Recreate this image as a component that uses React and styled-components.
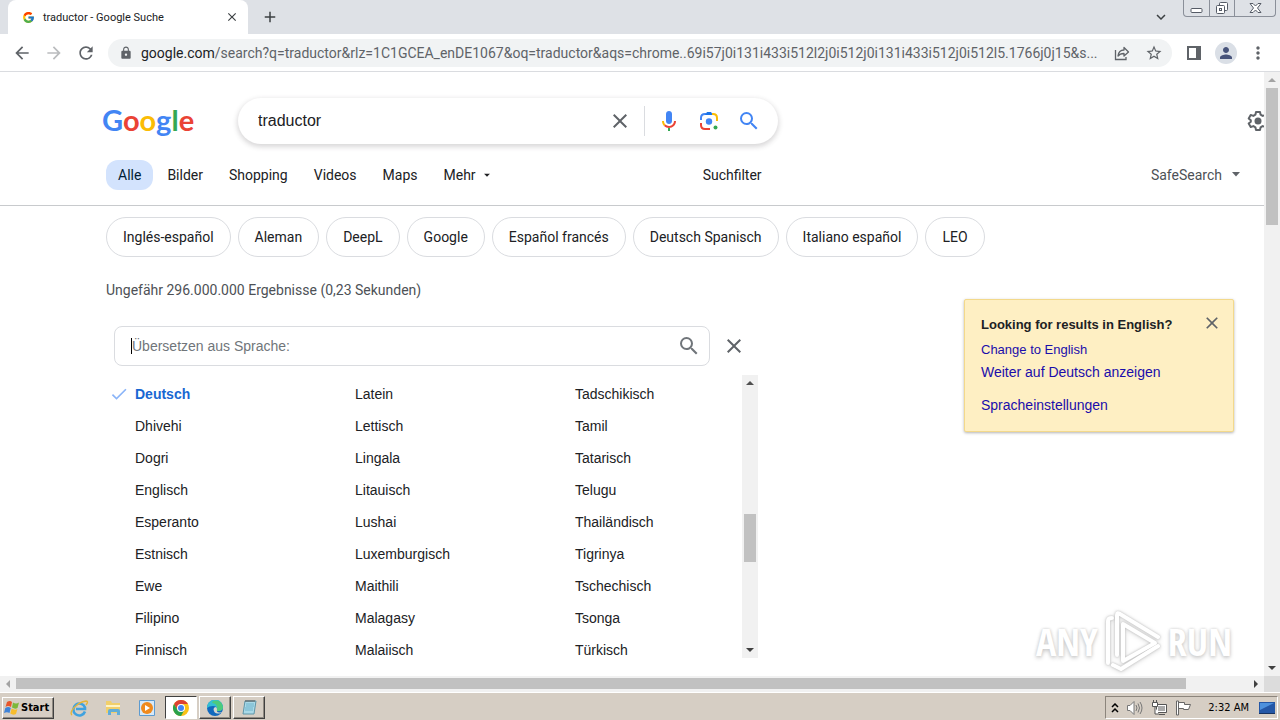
import React, {useState} from "react"
import styled, {createGlobalStyle, css} from "styled-components"
import {FcGoogle} from "react-icons/fc"
import {MdClose, MdSearch, MdCheck, MdArrowBack, MdArrowForward, MdRefresh, MdLock, MdStarOutline, MdMoreVert, MdAdd, MdArrowDropDown, MdPerson, MdKeyboardArrowDown} from "react-icons/md"

const GlobalStyle = createGlobalStyle`
    * {
        box-sizing: border-box;
    }
    body {
        margin: 0;
        background: #fff;
        color: #202124;
        font-family: "Liberation Sans", Arial, sans-serif;
        font-size: 14px;
    }
    button, input {
        font: inherit;
        color: inherit;
        border: 0;
        padding: 0;
        background: none;
    }
    a {
        color: inherit;
        text-decoration: none;
    }
    svg {
        display: block;
        flex: none;
    }
`

const uiFont = `Roboto, "Noto Sans", sans-serif`
const productFont = `Roboto, sans-serif`

const Screen = styled.div`
    display: flex;
    flex-direction: column;
    height: 100vh;
    overflow: hidden;
`

/* browser frame */

const TabStrip = styled.div`
    display: flex;
    align-items: center;
    height: 34px;
    padding-left: 8px;
    background: #dee1e6;
`
const Tab = styled.div`
    display: flex;
    align-items: center;
    width: 240px;
    height: 34px;
    padding: 0 9px 0 14px;
    gap: 8px;
    border-radius: 8px 8px 0 0;
    background: #fff;
    font-family: ${uiFont};
    font-size: 11px;
`
const TabTitle = styled.span`
    flex: 1;
    white-space: nowrap;
`
const IconButton = styled.button`
    display: flex;
    align-items: center;
    justify-content: center;
    width: ${(props) => props.$size || 24}px;
    height: ${(props) => props.$size || 24}px;
    color: ${(props) => props.$color || "#5f6368"};
    flex: none;
`
const NewTab = styled(IconButton)`
    margin-left: 10px;
`
const WindowControls = styled.div`
    display: flex;
    align-self: flex-start;
    height: 17px;
    margin: 0 4px 0 10px;
    border: 1px solid #8a8f99;
    border-top: 0;
    border-radius: 0 0 4px 4px;
`
const WindowButton = styled.button`
    display: flex;
    align-items: center;
    justify-content: center;
    width: ${(props) => (props.$wide ? 41 : 25)}px;
    & + & {
        border-left: 1px solid #8a8f99;
    }
`
const Spacer = styled.div`
    flex: 1;
`

const Toolbar = styled.div`
    display: flex;
    align-items: center;
    height: 38px;
    padding: 0 10px;
    gap: 8px;
    border-bottom: 1px solid #dadce0;
    background: #fff;
`
const AddressBar = styled.div`
    display: flex;
    align-items: center;
    flex: 1;
    min-width: 0;
    height: 28px;
    margin: 0 2px;
    padding: 0 6px 0 11px;
    gap: 8px;
    border-radius: 14px;
    background: #f1f3f4;
    color: #5f6368;
`
const Address = styled.a`
    flex: 1;
    min-width: 0;
    overflow: hidden;
    white-space: nowrap;
    font-family: ${uiFont};
    font-size: 14px;
    line-height: 20px;
`
const Host = styled.span`
    color: #202124;
`
const Avatar = styled.button`
    display: flex;
    align-items: center;
    justify-content: center;
    width: 22px;
    height: 22px;
    margin: 0 1px;
    border-radius: 50%;
    background: #dadfe6;
    color: #47537a;
`

/* scrollbars */

const Track = styled.div`
    display: flex;
    flex: none;
    background: #f1f1f1;
    ${(props) => props.$horizontal ? css`
        height: 16px;
        padding-bottom: 1px;
    ` : css`
        flex-direction: column;
        width: 16px;
    `}
`
const Arrow = styled.button`
    display: flex;
    align-items: center;
    justify-content: center;
    width: 16px;
    height: 16px;
    flex: none;
    svg {
        transform: rotate(${(props) => props.$turn}deg);
    }
`
const Groove = styled.div`
    display: flex;
    flex-direction: inherit;
    flex: 1;
    min-height: 0;
`
const Thumb = styled.div`
    background: #c1c1c1;
    margin: ${(props) => (props.$horizontal ? "2px 0" : "0 2px")};
`

const ScrollBar = ({horizontal, start, size, atStart}) => (
    <Track $horizontal={horizontal}>
        <Arrow $turn={horizontal ? -90 : 0} aria-label="Zurück"><Triangle color={atStart ? "#a3a3a3" : "#505050"} /></Arrow>
        <Groove>
            <div style={{flexBasis: start + "%"}} />
            <Thumb $horizontal={horizontal} style={{flexBasis: size + "%"}} />
        </Groove>
        <Arrow $turn={horizontal ? 90 : 180} aria-label="Weiter"><Triangle color="#404040" /></Arrow>
    </Track>
)

const Triangle = ({color}) => (
    <svg width="8" height="4" viewBox="0 0 8 4"><path d="M0 4L4 0l4 4z" fill={color} /></svg>
)

/* results page */

const Viewport = styled.div`
    display: flex;
    flex: 1;
    min-height: 0;
`
const Page = styled.main`
    position: relative;
    flex: 1;
    min-width: 0;
    overflow: hidden;
`
const SearchRow = styled.form`
    display: flex;
    align-items: center;
    padding: 26px 0 0 102px;
`
const Logo = styled.a`
    width: 136px;
    font-family: Lato, sans-serif;
    font-size: 29px;
    line-height: 44px;
    padding-bottom: 2px;
    font-weight: 700;
`
const Letter = styled.span`
    color: ${(props) => props.$color};
`
const SearchBox = styled.div`
    display: flex;
    align-items: center;
    width: 540px;
    height: 46px;
    padding: 0 17px 0 20px;
    border-radius: 24px;
    box-shadow: 0 2px 5px 1px rgba(64, 60, 67, 0.2);
`
const Query = styled.input`
    flex: 1;
    min-width: 0;
    outline: none;
    font-size: 16px;
`
const Divider = styled.span`
    height: 30px;
    margin: 0 12px;
    border-left: 1px solid #dadce0;
`
const Tools = styled.div`
    display: flex;
    gap: 16px;
`
const Gear = styled(IconButton)`
    margin: 0 -6px 0 auto;
`
const Nav = styled.nav`
    display: flex;
    align-items: center;
    height: 62px;
    padding: 0 24px 0 106px;
    gap: 2px;
    border-bottom: 1px solid #c8cacd;
    font-family: ${productFont};
`
const NavLink = styled.a`
    display: flex;
    align-items: center;
    height: 30px;
    padding: 0 12px;
    border-radius: 12px;
    background: ${(props) => (props.$active ? "#d3e3fd" : "none")};
    color: ${(props) => (props.$active ? "#001d35" : "#202124")};
`
const NavButton = styled.button`
    display: flex;
    align-items: center;
    gap: 4px;
    height: 30px;
    padding: 0 12px;
`
const FilterButton = styled(NavButton)`
    margin-left: 183px;
`
const SafeSearch = styled(NavButton)`
    margin-left: auto;
    padding: 0;
    gap: 10px;
    color: #4d5156;
`
const Chips = styled.div`
    display: flex;
    gap: 7px;
    padding: 11px 0 0 106px;
    font-family: ${productFont};
`
const Chip = styled.a`
    height: 40px;
    padding: 0 16px;
    border: 1px solid #dadce0;
    border-radius: 20px;
    line-height: 38px;
    white-space: nowrap;
`
const Columns = styled.div`
    display: flex;
    justify-content: space-between;
    align-items: flex-start;
    padding: 0 30px 0 106px;
`
const Stats = styled.p`
    margin: 0;
    padding-top: 23px;
    line-height: 20px;
    color: #4d5156;
    font-family: ${productFont};
`
const Picker = styled.section`
    width: 652px;
    padding-top: 26px;
`
const PickerHead = styled.div`
    display: flex;
    align-items: center;
    gap: 12px;
    padding: 0 12px 0 8px;
`
const LanguageField = styled.label`
    display: flex;
    align-items: center;
    flex: 1;
    height: 40px;
    padding: 0 8px 0 16px;
    border: 1px solid #dadce0;
    border-radius: 8px;
    color: #70757a;
`
const Caret = styled.span`
    width: 1px;
    height: 16px;
    background: #000;
`
const LanguageInput = styled.input`
    flex: 1;
    min-width: 0;
    outline: none;
    &::placeholder {
        color: #70757a;
        opacity: 1;
    }
`
const PickerBody = styled.div`
    display: flex;
    height: 283px;
    margin-top: 9px;
`
const Languages = styled.div`
    display: grid;
    grid-auto-flow: column;
    grid-template-rows: repeat(9, 32px);
    grid-auto-columns: 220px;
    flex: 1;
    min-width: 0;
    overflow: hidden;
    padding: 3px 0 0 3px;
`
const Language = styled.button`
    display: flex;
    align-items: center;
    gap: 6px;
    padding-left: ${(props) => (props.$selected ? 0 : 26)}px;
    color: ${(props) => (props.$selected ? "#1967d2" : "#202124")};
    font-weight: ${(props) => (props.$selected ? 700 : 400)};
    svg {
        color: #8ab4f8;
    }
`

const Notice = styled.aside`
    display: grid;
    grid-template-columns: 1fr auto;
    width: 270px;
    margin-top: 42px;
    padding: 13px 11px 14px 16px;
    border: 1px solid #f3d98b;
    border-radius: 2px;
    background: #feefc3;
    box-shadow: 0 1px 3px rgba(0, 0, 0, 0.3);
`
const NoticeTitle = styled.strong`
    padding-bottom: 1px;
    font-size: 13px;
    line-height: 24px;
    white-space: nowrap;
`
const NoticeLink = styled.a`
    grid-column: 1 / -1;
    margin-top: ${(props) => (props.$apart ? 10 : 0)}px;
    color: #1a0dab;
    font-size: ${(props) => (props.$small ? 13 : 14)}px;
    line-height: 23px;
`

const Watermark = styled.div`
    position: absolute;
    right: 32px;
    bottom: 3px;
    display: flex;
    align-items: center;
    gap: 6px;
    color: #fff;
    font-family: "Liberation Sans Narrow", "Open Sans Condensed", "Liberation Sans", sans-serif;
    font-size: 38px;
    line-height: 64px;
    text-shadow: 0 0 3px #ccc, 0 2px 4px #ccc;
    svg {
        filter: drop-shadow(0 0 1px #bbb) drop-shadow(0 1px 2px #ddd);
    }
`

/* taskbar */

const BottomScroll = styled.div`
    display: grid;
    grid-template-columns: 1fr 16px;
    background: #dcdcdc;
`
const Taskbar = styled.footer`
    display: flex;
    align-items: center;
    height: 28px;
    padding: 2px 2px 0;
    border-top: 1px solid #fff;
    background: #d6cec4;
    font-family: "DejaVu Sans Condensed", "DejaVu Sans", sans-serif;
    font-size: 11px;
    color: #000;
`
const raised = css`
    border: 1px solid;
    border-color: #fff #404040 #404040 #fff;
    box-shadow: inset -1px -1px #908a82;
`
const StartButton = styled.button`
    ${raised}
    display: flex;
    align-items: center;
    gap: 1px;
    width: 52px;
    height: 22px;
    padding-left: 1px;
    font-weight: 700;
`
const QuickLaunch = styled.div`
    display: flex;
    align-items: center;
    gap: 14px;
    padding: 0 8px 0 15px;
`
const Tasks = styled.div`
    display: flex;
    gap: 2px;
`
const Task = styled.button`
    display: flex;
    align-items: center;
    justify-content: center;
    width: 32px;
    height: 23px;
    ${raised}
    ${(props) => props.$active && css`
        border-color: #404040 #fff #fff #404040;
        box-shadow: none;
        background: #fff;
    `}
`
const Tray = styled.div`
    display: flex;
    align-items: center;
    gap: 7px;
    height: 23px;
    padding: 0 2px 0 5px;
    margin-left: auto;
    border: 1px solid;
    border-color: #8c857c #fff #fff #8c857c;
`
const Clock = styled.time`
    margin: 0 3px 0 9px;
`

const MicIcon = () => (
    <svg width="24" height="24" viewBox="0 0 24 24">
        <path d="M12 15c1.700 0 3-1.300 3-3V5c0-1.700-1.300-3-3-3S9 3.300 9 5v7c0 1.700 1.300 3 3 3z" fill="#4285f4" />
        <path d="M11 18.900h2V22h-2z" fill="#34a853" />
        <path d="M7 12H5c0 1.900.8 3.700 2 5l1.400-1.400C7.500 14.600 7 13.300 7 12z" fill="#fbbc04" />
        <path d="M12 17c-1.400 0-2.700-.6-3.600-1.400L7 17c1.300 1.200 3.100 2 5 2 3.900 0 7-3.100 7-7h-2c0 2.800-2.200 5-5 5z" fill="#ea4335" />
    </svg>
)

const LensIcon = () => (
    <svg width="24" height="24" viewBox="0 0 24 24" fill="none" strokeWidth="2">
        <path d="M4 11V9q0-4 4-4h1" stroke="#4285f4" />
        <path d="M8 6l2-3h4l2 3z" fill="#1a73e8" />
        <path d="M15 5h1q4 0 4 4v3" stroke="#fbbc04" />
        <path d="M4 14v2q0 4 4 4h5" stroke="#ea4335" />
        <circle cx="12" cy="12.500" r="3.200" fill="#4285f4" />
        <circle cx="18.500" cy="18.500" r="2" fill="#34a853" />
    </svg>
)

const GearIcon = () => (
    <svg width="24" height="24" viewBox="0 0 24 24">
        <path d="M10 3h4l.6 2.700 2 1.200 2.700-.9 2 3.400-2.100 1.900v1.400l2.100 1.900-2 3.400-2.700-.9-2 1.200L14 21h-4l-.6-2.700-2-1.200-2.700.9-2-3.400 2.100-1.900v-1.400L2.700 9.400l2-3.400 2.700.9 2-1.200z" fill="none" stroke="#5f6368" strokeWidth="2" strokeLinejoin="round" />
        <circle cx="12" cy="12" r="3.500" fill="#5f6368" />
    </svg>
)

const ShareIcon = () => (
    <svg width="16" height="16" viewBox="0 0 16 16" fill="none" stroke="#5f6368" strokeWidth="1.300">
        <path d="M1.500 5v9.500H12V12" />
        <path d="M4 11c.5-4 2.500-6 6-6V2.500L14.500 7 10 11V8.500C7.500 8.500 5.500 9 4 11z" strokeLinejoin="round" />
    </svg>
)

const PanelIcon = () => (
    <svg width="14" height="14" viewBox="0 0 14 14">
        <path d="M1 1h12v12H1z" fill="none" stroke="#5f6368" strokeWidth="2" />
        <path d="M9 1h4v12H9z" fill="#5f6368" />
    </svg>
)

const PlayLogo = () => (
    <svg width="58" height="64" viewBox="0 0 58 64" fill="none" stroke="#fff" strokeWidth="4" strokeLinecap="round" strokeLinejoin="round">
        <path d="M4 54V12q0-3 4-3" />
        <path d="M13 46V6q0-3 3-1l38 23" />
        <path d="M19 15v37l32-18z" />
        <path d="M9 56l8 4 37-23" />
    </svg>
)

const WindowsIcon = () => (
    <svg width="16" height="16" viewBox="0 0 16 16">
        <path d="M3 2q3-2 5 0L7 7Q4 5 1.500 7z" fill="#e8562a" />
        <path d="M9 2.500q3 2 6 0L13.500 8Q11 9.500 8 7.500z" fill="#7cb83a" />
        <path d="M1.300 8q3-2 5.500 0l-1.300 5Q3 11.500 0 13z" fill="#3f83d8" />
        <path d="M7.700 8.500q3 2 5.700.5L12 14q-3 1.500-5.700-.5z" fill="#f7bd2c" />
    </svg>
)

const ExplorerIcon = () => (
    <svg width="20" height="18" viewBox="0 0 20 18" fill="none">
        <path d="M16 12.500A6 6 0 1 1 16 8.500V10H7" stroke="#3fa2df" strokeWidth="2.600" />
        <path d="M3 16C-1 14 8 3 17 2q3 0 0 4" stroke="#e5b437" strokeWidth="1.400" />
    </svg>
)

const FolderIcon = () => (
    <svg width="20" height="18" viewBox="0 0 20 18">
        <path d="M3 2h5l1 2h8v10H3z" fill="#f1cf6b" />
        <path d="M3 6h14v2H3z" fill="#fff4c4" />
        <path d="M5 16v-4q0-2 2-2h8q2 0 2 2v4h-3v-3H8v3z" fill="#61add8" />
    </svg>
)

const PlayerIcon = () => (
    <svg width="20" height="18" viewBox="0 0 20 18">
        <path d="M2.500 1.500h15v15h-15z" fill="#d7e9f8" stroke="#5d9bd0" />
        <circle cx="10" cy="9" r="6" fill="#f08a1d" />
        <path d="M8 6l5 3-5 3z" fill="#fff" />
    </svg>
)

const ChromeIcon = () => (
    <svg width="16" height="16" viewBox="0 0 16 16">
        <circle cx="8" cy="8" r="8" fill="#fbc116" />
        <path d="M1.070 4A8 8 0 0 1 14.930 4H8L4.540 10z" fill="#dd4132" />
        <path d="M1.070 4A8 8 0 0 0 8 16l3.460-6H4.540z" fill="#2aa14c" />
        <circle cx="8" cy="8" r="4" fill="#fff" />
        <circle cx="8" cy="8" r="3" fill="#4285f4" />
    </svg>
)

const EdgeIcon = () => (
    <svg width="17" height="16" viewBox="0 0 17 16">
        <circle cx="8" cy="8" r="8" fill="#1269bd" />
        <path d="M0 8a8 8 0 0 1 16-1q0 4-5 4-2 0-1-2 0-3-4-3-4 0-6 2z" fill="#35bfd2" />
        <path d="M6 1q8-2 10 6 0 4-5 4-2 0-1-2 1-5-5-6z" fill="#4dcb7c" />
        <path d="M10 9q-1 5 5 3l-1 1Q7 15 6.500 9 7 7 9 7q1 1 1 2z" fill="#d5d5d0" />
    </svg>
)

const NotepadIcon = () => (
    <svg width="16" height="17" viewBox="0 0 16 17">
        <path d="M4 2h11l-2 13H2z" fill="#a9d9e8" stroke="#5f95a8" />
        <path d="M5 5h8M5 7h8M4 9h8M4 11h8" stroke="#6fb3cb" />
        <path d="M5 1v2m2-2v2m2-2v2m2-2v2m2-2v2" stroke="#555" />
    </svg>
)

const TrayUpIcon = () => (
    <svg width="8" height="10" viewBox="0 0 8 10" fill="none" stroke="#000" strokeWidth="1.500"><path d="M1 4l3-3 3 3M1 9l3-3 3 3" /></svg>
)

const SpeakerIcon = () => (
    <svg width="18" height="16" viewBox="0 0 18 16" fill="none" stroke="#777">
        <path d="M1.500 5.500H4l4-4v13l-4-4H1.500z" fill="#fff" />
        <path d="M10 5q2 3 0 6M12 3.500q3 4.500 0 9M14 2q4 6 0 12" />
    </svg>
)

const NetworkIcon = () => (
    <svg width="17" height="16" viewBox="0 0 17 16" fill="#fff" stroke="#555">
        <path d="M5.500 4.500h10v8h-10zM8 14.500h6" />
        <path d="M7 6h7v5H7z" fill="#aaa" stroke="none" />
        <path d="M1.500 2.500h5v4h-5zM2.500 0v2M5.500 0v2M4 7v7h4" />
    </svg>
)

const FlagIcon = () => (
    <svg width="17" height="16" viewBox="0 0 17 16" fill="#fff" stroke="#666">
        <path d="M1.500 1v14h2V1zM3.500 2.500h6v2h6l-2 5h-5v-1h-5z" />
    </svg>
)

const DesktopIcon = () => (
    <svg width="16" height="14" viewBox="0 0 16 14">
        <path d="M0 1h16v11H0z" fill="#2457a6" />
        <path d="M1 2h14L1 9z" fill="#4d91dd" />
        <path d="M0 12h16v1H0z" fill="#173260" />
    </svg>
)

const DropArrow = () => (
    <svg width="8" height="5" viewBox="0 0 8 5"><path d="M0 0h8L4 4.500z" fill="#5f6368" /></svg>
)

const logo = [["G", "#4285f4"], ["o", "#ea4335"], ["o", "#fbbc05"], ["g", "#4285f4"], ["l", "#34a853"], ["e", "#ea4335"]]
const sections = ["Alle", "Bilder", "Shopping", "Videos", "Maps"]
const related = ["Inglés-español", "Aleman", "DeepL", "Google", "Español francés", "Deutsch Spanisch", "Italiano español", "LEO"]
const languages = [
    "Deutsch", "Dhivehi", "Dogri", "Englisch", "Esperanto", "Estnisch", "Ewe", "Filipino", "Finnisch",
    "Latein", "Lettisch", "Lingala", "Litauisch", "Lushai", "Luxemburgisch", "Maithili", "Malagasy", "Malaiisch",
    "Tadschikisch", "Tamil", "Tatarisch", "Telugu", "Thailändisch", "Tigrinya", "Tschechisch", "Tsonga", "Türkisch"
]

const LanguagePicker = () => {
    const [selected, setSelected] = useState("Deutsch")
    const [filter, setFilter] = useState("")

    return (
        <Picker>
            <PickerHead>
                <LanguageField>
                    <Caret />
                    <LanguageInput
                    aria-label="Übersetzen aus Sprache"
                    placeholder="Übersetzen aus Sprache:"
                    value={filter}
                    onChange={(e)=>setFilter(e.target.value)}
                    />
                    <MdSearch size={24} />
                </LanguageField>
                <IconButton aria-label="Schließen"><MdClose size={24} /></IconButton>
            </PickerHead>
            <PickerBody>
                <Languages>
                    {languages.map((name) => (
                        <Language key={name} $selected={name === selected} onClick={()=>setSelected(name)}>
                            {name === selected && <MdCheck size={20} />}
                            {name}
                        </Language>
                    ))}
                </Languages>
                <ScrollBar start={49} size={19} />
            </PickerBody>
        </Picker>
    )
}

const App = () => {
    const [query, setQuery] = useState("traductor")

    return (
        <Screen>
            <GlobalStyle />
            <TabStrip>
                <Tab>
                    <FcGoogle size={13} />
                    <TabTitle>traductor - Google Suche</TabTitle>
                    <IconButton $size={14} $color="#3c4043" aria-label="Tab schließen"><MdClose size={14} /></IconButton>
                </Tab>
                <NewTab $color="#3c4043" aria-label="Neuer Tab"><MdAdd size={18} /></NewTab>
                <Spacer />
                <IconButton $color="#3c4043" aria-label="Tabs suchen"><MdKeyboardArrowDown size={18} /></IconButton>
                <WindowControls>
                    <WindowButton aria-label="Minimieren">
                        <svg width="13" height="16" viewBox="0 0 13 16"><rect x="1" y="8.500" width="11" height="4" rx="1" fill="#fff" stroke="#555b66" /></svg>
                    </WindowButton>
                    <WindowButton aria-label="Wiederherstellen">
                        <svg width="14" height="16" viewBox="0 0 14 16" fill="#fff" stroke="#555b66"><rect x="4.500" y="2.500" width="8" height="8" rx="1" /><rect x="1.500" y="5.500" width="8" height="8" rx="1" /><rect x="4.500" y="8.500" width="2" height="2" /></svg>
                    </WindowButton>
                    <WindowButton $wide aria-label="Schließen">
                        <svg width="13" height="16" viewBox="0 0 13 16"><path d="M1 3.500h3l2.500 2.500L9 3.500h3L8.500 8l3.500 4.500H9L6.500 10 4 12.500H1L4.500 8z" fill="#fff" stroke="#555b66" /></svg>
                    </WindowButton>
                </WindowControls>
            </TabStrip>
            <Toolbar>
                <IconButton aria-label="Zurück"><MdArrowBack size={20} /></IconButton>
                <IconButton $color="#babcbe" aria-label="Vorwärts"><MdArrowForward size={20} /></IconButton>
                <IconButton aria-label="Neu laden"><MdRefresh size={20} /></IconButton>
                <AddressBar>
                    <MdLock size={14} />
                    <Address href="#">
                        <Host>google.com</Host>/search?q=traductor&amp;rlz=1C1GCEA_enDE1067&amp;oq=traductor&amp;aqs=chrome..69i57j0i131i433i512l2j0i512j0i131i433i512j0i512l5.1766j0j15&amp;s...
                    </Address>
                    <IconButton aria-label="Teilen"><ShareIcon /></IconButton>
                    <IconButton aria-label="Lesezeichen"><MdStarOutline size={18} /></IconButton>
                </AddressBar>
                <IconButton aria-label="Seitenleiste"><PanelIcon /></IconButton>
                <Avatar aria-label="Profil"><MdPerson size={18} /></Avatar>
                <IconButton aria-label="Menü"><MdMoreVert size={20} /></IconButton>
            </Toolbar>
            <Viewport>
                <Page>
                    <SearchRow onSubmit={(e)=>e.preventDefault()}>
                        <Logo href="#">
                            {logo.map(([letter, color], i) => <Letter key={i} $color={color}>{letter}</Letter>)}
                        </Logo>
                        <SearchBox>
                            <Query aria-label="Suche" value={query} onChange={(e)=>setQuery(e.target.value)} />
                            <IconButton type="button" aria-label="Löschen"><MdClose size={24} /></IconButton>
                            <Divider />
                            <Tools>
                                <IconButton type="button" aria-label="Sprachsuche"><MicIcon /></IconButton>
                                <IconButton type="button" aria-label="Bildersuche"><LensIcon /></IconButton>
                                <IconButton type="submit" $color="#4285f4" aria-label="Suche"><MdSearch size={24} /></IconButton>
                            </Tools>
                        </SearchBox>
                        <Gear type="button" aria-label="Einstellungen"><GearIcon /></Gear>
                    </SearchRow>
                    <Nav>
                        {sections.map((name) => (
                            <NavLink key={name} href="#" $active={name === "Alle"}>{name}</NavLink>
                        ))}
                        <NavButton>Mehr <MdArrowDropDown size={14} /></NavButton>
                        <FilterButton>Suchfilter</FilterButton>
                        <SafeSearch>SafeSearch <DropArrow /></SafeSearch>
                    </Nav>
                    <Chips>
                        {related.map((name) => <Chip key={name} href="#">{name}</Chip>)}
                    </Chips>
                    <Columns>
                        <div>
                            <Stats>Ungefähr 296.000.000 Ergebnisse (0,23 Sekunden)</Stats>
                            <LanguagePicker />
                        </div>
                        <Notice>
                            <NoticeTitle>Looking for results in English?</NoticeTitle>
                            <IconButton $size={20} aria-label="Schließen"><MdClose size={20} /></IconButton>
                            <NoticeLink href="#" $small>Change to English</NoticeLink>
                            <NoticeLink href="#">Weiter auf Deutsch anzeigen</NoticeLink>
                            <NoticeLink href="#" $apart>Spracheinstellungen</NoticeLink>
                        </Notice>
                    </Columns>
                    <Watermark>
                        <span>ANY</span>
                        <PlayLogo />
                        <span>RUN</span>
                    </Watermark>
                </Page>
                <ScrollBar start={0} size={24} atStart />
            </Viewport>
            <BottomScroll>
                <ScrollBar horizontal start={0} size={95} atStart />
            </BottomScroll>
            <Taskbar>
                <StartButton><WindowsIcon />Start</StartButton>
                <QuickLaunch>
                    <ExplorerIcon />
                    <FolderIcon />
                    <PlayerIcon />
                </QuickLaunch>
                <Tasks>
                    <Task $active aria-label="Chrome"><ChromeIcon /></Task>
                    <Task aria-label="Edge"><EdgeIcon /></Task>
                    <Task aria-label="Editor"><NotepadIcon /></Task>
                </Tasks>
                <Tray>
                    <TrayUpIcon />
                    <SpeakerIcon />
                    <NetworkIcon />
                    <FlagIcon />
                    <Clock>2:32 AM</Clock>
                    <DesktopIcon />
                </Tray>
            </Taskbar>
        </Screen>
    )
}

export default App
